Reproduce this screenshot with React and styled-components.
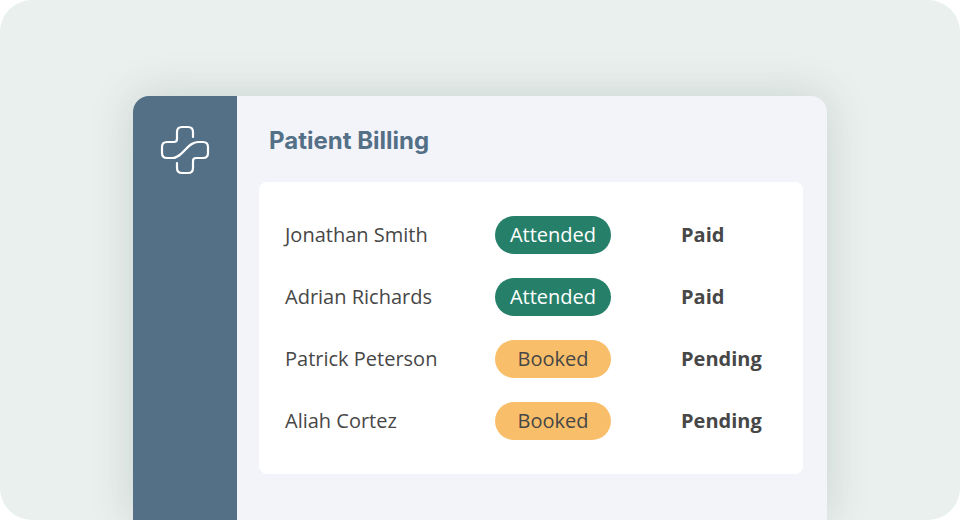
import React from "react";
import styled, { createGlobalStyle } from "styled-components";

const GlobalStyle = createGlobalStyle`
  *, *::before, *::after { box-sizing: border-box; }
  body { margin: 0; background: #fff; font-family: "Open Sans", sans-serif; }
`;

const Stage = styled.main`
  display: flex;
  min-height: 100vh;
  padding: 96px 133px 0;
  overflow: hidden;
  border-radius: 32px;
  background: #e9f0ee;
`;

const AppWindow = styled.div`
  display: flex;
  flex: 1;
  overflow: hidden;
  border-radius: 16px 16px 0 0;
  background: #f3f4f9;
  box-shadow: 0 0 44px rgba(60, 80, 70, 0.18);
`;

const Sidebar = styled.nav`
  display: flex;
  flex: 0 0 104px;
  flex-direction: column;
  align-items: center;
  padding-top: 29px;
  background: #547087;
`;

const Content = styled.section`
  flex: 1;
  padding: 28px 24px 46px 22px;
`;

const Title = styled.h1`
  margin: 0 0 24px;
  padding-left: 10px;
  color: #547087;
  font: 700 24px/34px Inter, sans-serif;
`;

const Card = styled.div`
  padding: 22px 26px;
  border-radius: 8px;
  background: #fff;
`;

const Table = styled.table`
  width: 100%;
  table-layout: fixed;
  border-collapse: collapse;
  color: #474747;
  font-size: 20px;
  line-height: 28px;
`;

const Cell = styled.td`
  height: 62px;
  padding: 0;
  font-weight: ${(p) => (p.$strong ? 700 : 400)};
`;

const NameColumn = styled.col`
  width: 210px;
`;

const StatusColumn = styled.col`
  width: 186px;
`;

const Badge = styled.span`
  display: block;
  width: 116px;
  border-radius: 19px;
  line-height: 38px;
  text-align: center;
  color: ${(p) => (p.$status === "Attended" ? "#fff" : "#474747")};
  background: ${(p) => (p.$status === "Attended" ? "#267f69" : "#f8be69")};
`;

const rows = [
  { name: "Jonathan Smith", status: "Attended", payment: "Paid" },
  { name: "Adrian Richards", status: "Attended", payment: "Paid" },
  { name: "Patrick Peterson", status: "Booked", payment: "Pending" },
  { name: "Aliah Cortez", status: "Booked", payment: "Pending" },
];

function Logo() {
  return (
    <svg width="50" height="50" viewBox="0 0 50 50" fill="none" stroke="#fff" strokeWidth="2.2" strokeLinecap="round" aria-hidden="true">
      <path d="M33 12V7Q33 2 28 2H22Q17 2 17 7V14Q17 17 14 17H7Q2 17 2 22V28Q2 33 7 33H12C23 33 27 17 38 17H43Q48 17 48 22V28Q48 33 43 33H36Q33 33 33 36V43Q33 48 28 48H22Q17 48 17 43V38" />
    </svg>
  );
}

export default function App() {
  return (
    <>
      <GlobalStyle />
      <Stage>
        <AppWindow>
          <Sidebar><Logo /></Sidebar>
          <Content>
            <Title>Patient Billing</Title>
            <Card>
              <Table aria-label="Patient billing">
                <colgroup><NameColumn /><StatusColumn /><col /></colgroup>
                <tbody>
                  {rows.map((row) => (
                    <tr key={row.name}>
                      <Cell>{row.name}</Cell>
                      <Cell><Badge $status={row.status}>{row.status}</Badge></Cell>
                      <Cell $strong>{row.payment}</Cell>
                    </tr>
                  ))}
                </tbody>
              </Table>
            </Card>
          </Content>
        </AppWindow>
      </Stage>
    </>
  );
}
